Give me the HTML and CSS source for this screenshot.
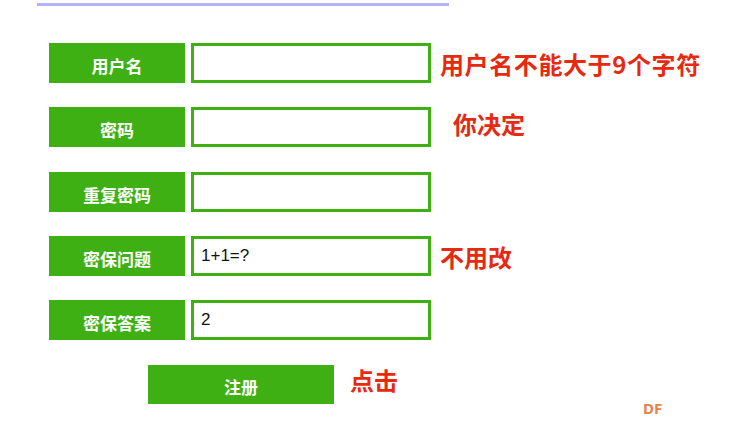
FILE: index.html
```html
<!DOCTYPE html>
<html lang="zh">
<head>
<meta charset="utf-8">
<link rel="stylesheet" href="styles.css">
</head>
<body>
<div class="topline"></div>
<form class="form">
  <div class="row">
    <div class="label">用户名</div>
    <div class="field"></div>
    <div class="msg msg-wide">用户名不能大于9个字符</div>
  </div>
  <div class="row">
    <div class="label">密码</div>
    <div class="field"></div>
    <div class="msg msg-indent">你决定</div>
  </div>
  <div class="row">
    <div class="label">重复密码</div>
    <div class="field"></div>
  </div>
  <div class="row">
    <div class="label">密保问题</div>
    <div class="field">1+1=?</div>
    <div class="msg">不用改</div>
  </div>
  <div class="row">
    <div class="label">密保答案</div>
    <div class="field">2</div>
  </div>
  <div class="row row-submit">
    <div class="submit">注册</div>
    <div class="msg msg-click">点击</div>
  </div>
</form>
<div class="brand">DF</div>
</body>
</html>
```
FILE: styles.css
```css
html, body {
  margin: 0;
  padding: 0;
  background: #ffffff;
  width: 750px;
  height: 439px;
  overflow: hidden;
  font-family: "Noto Sans CJK SC", "Noto Sans", sans-serif;
}
.topline {
  margin: 3px 0 0 37px;
  width: 412px;
  height: 3px;
  background: #b3b3f7;
}
.form {
  display: flex;
  flex-direction: column;
  gap: 24.25px;
  padding: 37px 0 0 49px;
}
.row {
  display: flex;
  align-items: center;
  height: 40px;
}
.label {
  width: 136px;
  height: 40px;
  background: #3eb013;
  color: #ffffff;
  font-weight: bold;
  font-size: 17px;
  display: flex;
  align-items: center;
  justify-content: center;
  padding-top: 5px;
  box-sizing: border-box;
}
.field {
  margin-left: 6px;
  width: 240px;
  height: 40px;
  box-sizing: border-box;
  border: 3px solid #3eb013;
  background: #ffffff;
  padding: 0 0 0 7px;
  display: flex;
  align-items: center;
  font-family: "Liberation Sans", Arial, sans-serif;
  font-size: 17px;
  color: #111111;
}
.msg {
  margin-left: 9px;
  color: #e6290f;
  font-weight: bold;
  font-size: 24px;
  line-height: 1;
  padding-top: 2px;
}
.msg-wide {
  letter-spacing: 0.6px;
}
.msg-indent {
  margin-left: 22px;
  margin-top: -8px;
}
.row-submit {
  padding-left: 99px;
  margin-top: 0;
}
.submit {
  width: 186px;
  height: 39px;
  background: #3eb013;
  color: #ffffff;
  font-weight: bold;
  font-size: 17px;
  display: flex;
  align-items: center;
  justify-content: center;
  padding-top: 5px;
  box-sizing: border-box;
}
.msg-click {
  margin-left: 16px;
  margin-top: -10px;
}
.brand {
  position: absolute;
  left: 643px;
  top: 398px;
  color: #e8804a;
  font-family: "Noto Sans", sans-serif;
  font-weight: bold;
  font-size: 15px;
}
```
